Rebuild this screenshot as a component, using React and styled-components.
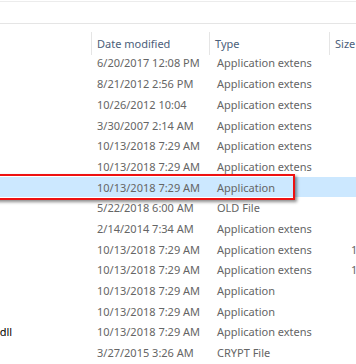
import React, { useLayoutEffect, useRef, useState } from "react";
import styled, { createGlobalStyle } from "styled-components";

const ROW_H = 20.7;
const NAME_PAD = 28; // icon space before the file name
const NAME_END = 12; // where the longest name ends on screen

const GlobalStyle = createGlobalStyle`
  html, body {
    margin: 0;
    padding: 0;
    background: #fff;
  }
  body {
    font-family: "Segoe UI", "Noto Sans", "Liberation Sans", sans-serif;
    font-size: 11px;
  }
`;

const Window = styled.div`
  width: 356px;
  height: 364px;
  overflow: hidden;
  position: relative;
  background: #fff;
`;

const SearchStrip = styled.div`
  margin-top: 1px;
  height: 21px;
  border-top: 1px solid #ececec;
  border-bottom: 1px solid #e5e5e5;
`;

const List = styled.div`
  margin-left: -${(p) => p.$scroll}px;
  width: max-content;
`;

const HeaderRow = styled.div`
  display: flex;
  align-items: flex-start;
  height: 28.6px;
`;

const HeaderCell = styled.div`
  box-sizing: border-box;
  width: ${(p) => p.$w}px;
  height: 23px;
  margin-top: 8px;
  padding-left: 5px;
  border-left: 1px solid #e5e5e5;
  display: flex;
  align-items: center;
  color: #4c607a;
  white-space: nowrap;
`;

const Row = styled.div`
  position: relative;
  display: flex;
  align-items: center;
  height: ${ROW_H}px;
  background: ${(p) => (p.$selected ? "#cce8ff" : "transparent")};
`;

const Cell = styled.div`
  box-sizing: border-box;
  width: ${(p) => p.$w}px;
  padding-left: ${(p) => p.$pad || 0}px;
  padding-right: ${(p) => p.$padRight || 0}px;
  text-align: ${(p) => p.$align || "left"};
  white-space: nowrap;
  overflow: hidden;
  color: ${(p) => p.$color || "#656565"};
`;

const Highlight = styled.div`
  position: absolute;
  left: ${(p) => p.$scroll - 6}px;
  width: 301px;
  top: -3px;
  bottom: -3px;
  box-sizing: border-box;
  border: 2px solid #ee1111;
  box-shadow: 2px 2px 3px rgba(0, 0, 0, 0.45);
  pointer-events: none;
`;

const files = [
  { name: "mfc140u.dll", date: "6/20/2017 12:08 PM", type: "Application extens", size: "45 KB" },
  { name: "msvcp110.dll", date: "8/21/2012 2:56 PM", type: "Application extens", size: "523 KB" },
  { name: "msvcr110_clr0400.dll", date: "10/26/2012 10:04", type: "Application extens", size: "855 KB" },
  { name: "msxml4.dll", date: "3/30/2007 2:14 AM", type: "Application extens", size: "1 KB" },
  { name: "netapi32.dll", date: "10/13/2018 7:29 AM", type: "Application extens", size: "82 KB" },
  { name: "netcfgx.dll", date: "10/13/2018 7:29 AM", type: "Application extens", size: "64 KB" },
  { name: "netsh.exe", date: "10/13/2018 7:29 AM", type: "Application", size: "96 KB", selected: true },
  { name: "nls.old", date: "5/22/2018 6:00 AM", type: "OLD File", size: "12 KB" },
  { name: "nvapi.dll", date: "2/14/2014 7:34 AM", type: "Application extens", size: "38 KB" },
  { name: "oleaut32.dll", date: "10/13/2018 7:29 AM", type: "Application extens", size: "1,274 KB" },
  { name: "opengl32.dll", date: "10/13/2018 7:29 AM", type: "Application extens", size: "1,143 KB" },
  { name: "PkgMgr.exe", date: "10/13/2018 7:29 AM", type: "Application", size: "62 KB" },
  { name: "poqexec.exe", date: "10/13/2018 7:29 AM", type: "Application", size: "88 KB" },
  { name: "api-ms-win-core-localization-l1-2-0.dll", date: "10/13/2018 7:29 AM", type: "Application extens", size: "44 KB", longest: true },
  { name: "pwrshplugin.crypt", date: "3/27/2015 3:26 AM", type: "CRYPT File", size: "20 KB" },
];

export default function App() {
  const longRef = useRef(null);
  const [scroll, setScroll] = useState(220);

  // scroll the list so the longest name ends just inside the left edge
  useLayoutEffect(() => {
    if (longRef.current) {
      const w = longRef.current.getBoundingClientRect().width;
      setScroll(Math.round(NAME_PAD + w - NAME_END));
    }
  }, []);

  const cols = { name: scroll + 91, date: 118, type: 120, size: 71 };

  return (
    <Window>
      <GlobalStyle />
      <SearchStrip />
      <List $scroll={scroll}>
        <HeaderRow>
          <HeaderCell $w={cols.name}>Name</HeaderCell>
          <HeaderCell $w={cols.date}>Date modified</HeaderCell>
          <HeaderCell $w={cols.type}>Type</HeaderCell>
          <HeaderCell $w={cols.size}>Size</HeaderCell>
        </HeaderRow>
        {files.map((f, i) => (
          <Row key={i} $selected={f.selected}>
            <Cell $w={cols.name} $pad={NAME_PAD} $color="#000">
              <span ref={f.longest ? longRef : null}>{f.name}</span>
            </Cell>
            <Cell $w={cols.date} $pad={6}>
              {f.date}
            </Cell>
            <Cell $w={cols.type} $pad={8}>
              {f.type}
            </Cell>
            <Cell $w={cols.size} $padRight={4} $align="right">
              {f.size}
            </Cell>
            {f.selected && <Highlight $scroll={scroll} />}
          </Row>
        ))}
      </List>
    </Window>
  );
}
